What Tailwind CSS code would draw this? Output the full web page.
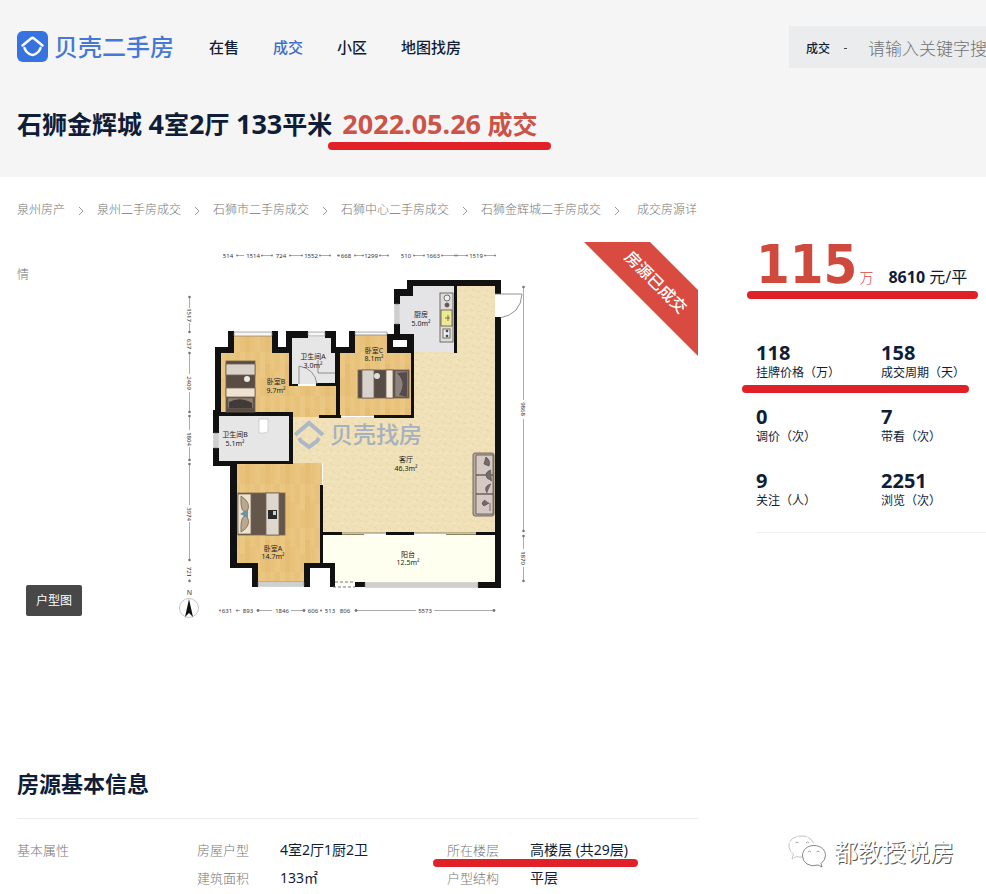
<!DOCTYPE html>
<html lang="zh-CN">
<head>
<meta charset="utf-8">
<meta name="viewport" content="width=device-width, initial-scale=1">
<title>石狮金辉城 4室2厅 133平米 - 贝壳二手房</title>
<script src="https://cdn.jsdelivr.net/npm/@tailwindcss/browser@4"></script>
</head>
<body class="relative min-h-screen overflow-x-hidden bg-white font-['Noto_Sans','Noto_Sans_CJK_SC',sans-serif] text-[#101d37]">
<header class="h-[177px] bg-[#f5f5f5] pl-[17px]">
  <div class="flex h-[94px] items-center">
    <a href="#" class="flex items-center gap-[6px] pb-[2px] text-[#4578d6]" aria-label="贝壳二手房">
      <svg class="size-[31px]" viewBox="0 0 31 31" aria-hidden="true">
        <rect width="31" height="31" rx="6" fill="#3672e0"/>
        <path d="M5.500 14.500 14 7.500Q15.500 6.300 17 7.500L25.500 14.500" fill="none" stroke="#fff" stroke-width="2.500" stroke-linecap="round" stroke-linejoin="round"/>
        <path d="M7.500 17Q8.500 20.500 12.500 23Q15.500 24.800 18.500 23Q22.500 20.500 23.500 17" fill="none" stroke="#fff" stroke-width="2.500" stroke-linecap="round"/>
      </svg>
      <span class="text-[24px] font-medium leading-[31px]">贝壳二手房</span>
    </a>
    <nav class="ml-[35px] flex gap-[34px] text-[15px] font-medium leading-[22px]">
      <a href="#">在售</a>
      <a href="#" class="text-[#3f6fc4]">成交</a>
      <a href="#">小区</a>
      <a href="#">地图找房</a>
    </nav>
    <form class="ml-auto flex h-[42px] w-[197px] items-center overflow-hidden bg-[#ebecee] pl-[17px] pt-[3px]">
      <select aria-label="搜索类型" class="w-[38px] shrink-0 appearance-none bg-transparent text-[12px] font-medium outline-none"><option>成交</option></select>
      <span class="h-px w-[3px] shrink-0 bg-[#444]" aria-hidden="true"></span>
      <input aria-label="关键字" type="text" placeholder="请输入关键字搜索" class="ml-[21px] w-[150px] shrink-0 bg-transparent text-[17px] font-light outline-none placeholder:text-[#6f7276]">
    </form>
  </div>
  <h1 class="flex items-center pt-[12px] text-[25px] font-bold leading-[36px]">
    <span class="whitespace-pre">石狮金辉城 <span class="text-[27px]">4</span>室<span class="text-[27px]">2</span>厅 <span class="text-[27px]">133</span>平米</span>
    <span class="relative ml-[10px] whitespace-nowrap text-[#cc5347]"><span class="text-[27px]">2022.05.26</span> 成交<span class="absolute -left-[14px] -right-[13px] top-[36px] h-[8px] rounded-full bg-[#e02128]"></span></span>
  </h1>
</header>

<main class="pl-[17px]">
  <div class="grid grid-cols-[1fr_230px] gap-[58px]">
    <div>
      <nav aria-label="面包屑" class="h-[65px] text-[12px] font-light leading-[65px] text-[#777]">
        <a href="#">泉州房产</a><svg class="mx-[13px] inline h-[8px] w-[6px]" viewBox="0 0 6 8"><path d="M1 0 5 4 1 8" fill="none" stroke="#999"/></svg><a href="#">泉州二手房成交</a><svg class="mx-[13px] inline h-[8px] w-[6px]" viewBox="0 0 6 8"><path d="M1 0 5 4 1 8" fill="none" stroke="#999"/></svg><a href="#">石狮市二手房成交</a><svg class="mx-[13px] inline h-[8px] w-[6px]" viewBox="0 0 6 8"><path d="M1 0 5 4 1 8" fill="none" stroke="#999"/></svg><a href="#">石狮中心二手房成交</a><svg class="mx-[13px] inline h-[8px] w-[6px]" viewBox="0 0 6 8"><path d="M1 0 5 4 1 8" fill="none" stroke="#999"/></svg><a href="#">石狮金辉城二手房成交</a><svg class="ml-[13px] mr-[17px] inline h-[8px] w-[6px]" viewBox="0 0 6 8"><path d="M1 0 5 4 1 8" fill="none" stroke="#999"/></svg><span>成交房源详</span><span>情</span>
      </nav>
      <div class="relative">
        <svg class="block w-full" viewBox="17 242 681 390" role="img" aria-label="户型图">
          <defs>
            <pattern id="wood" width="20" height="44" patternUnits="userSpaceOnUse">
              <rect width="20" height="44" fill="#e8c27b"/>
              <rect width="5" height="26" fill="#ebc784"/><rect x="5" y="12" width="5" height="32" fill="#e5bd73"/><rect x="10" width="5" height="18" fill="#eac580"/><rect x="15" y="20" width="5" height="24" fill="#e9c580"/>
            </pattern>
            <pattern id="stone" width="14" height="14" patternUnits="userSpaceOnUse">
              <rect width="14" height="14" fill="#f0e1b8"/>
              <path d="M1 3l3 1M8 1l3 2M5 8l2-1M10 9l3 2M2 12l2-1" stroke="#eadaab" stroke-width="1.200"/><path d="M5 5l2 1M11 6l2-1M7 12l2 0" stroke="#f5e9c7" stroke-width="1.200"/>
            </pattern>
            <marker id="ar" viewBox="0 0 4 4" refX="2" refY="2" markerWidth="4" markerHeight="4"><circle cx="2" cy="2" r="1.300" fill="#777"/></marker>
          </defs>
          <path d="M457 286H495V533H323V463H292V417H413V352H457z" fill="url(#stone)"/>
          <path d="M234 334H274V352H290V386H337V352H355V333H388V350H412V416H338V417H220V352H234z" fill="url(#wood)"/>
          <path d="M236 463H322V565H305V584H257V565H236z" fill="url(#wood)"/>
          <path d="M412 286H455V352H412V334H400V296H412z" fill="#e4e3e6"/>
          <path d="M292 337H335V384H292zM219 416H290V462H219z" fill="#e6e6e6"/>
          <path d="M323 535H495V583H335V566H323z" fill="#fffff0"/>
          <g fill="#111">
            <path d="M228 331H234V353H221V412H293V464H268V461H289V416H219V433H213V410H215V347H228z"/>
            <path d="M213 448H219V461H268V464H237V563H258V587H252V568H230V466H213z"/>
            <path d="M272 331H278V347H286V331H308V338H292V384H298V386H289V353H272zM325 331H336V347H349V331H355V353H340V415H341V418H319V415H336V386H316V383H335V353H331V338H325z"/>
            <path d="M394 289H407V280H501V294H495V286H457V353H454V286H413V296H400V304H394zM394 324H400V334H414V418H374V415H411V353H387V334H394z"/>
            <path d="M495 317H501V588H478V582H495zM320 485H323V563H335V587H330V568H310V587H304V563H320zM323 532H342V535H323zM386 532H414V535H386zM476 532H495V535H476zM355 582H365V587H355z"/>
          </g>
          <path d="M393 340H407V347H393z" fill="#fff"/>
          <g fill="#f6f6f6" stroke="#777" stroke-width=".600">
            <path d="M234 332H272V336H234zM308 332H325V336H308zM355 332H387V335H355zM395 304H399V324H395zM214 433H218V448H214zM258 582H304V586H258zM365 583H478V587H365z"/>
            <path d="M397 304V324M216 433V448M258 584H304M365 585H478" fill="none"/>
          </g>
          <path d="M342 533H386M414 533H476" stroke="#8b8264"/>
          <path d="M342 534.500H364M446 534.500H476" stroke="#8b8264"/>
          <path d="M335 582H355M333 587H355" stroke="#777" stroke-dasharray="3 2" fill="none"/>
          <path d="M495 294H522M522 294Q521 314 500 318M299 384V366M299 366Q315 369 317 384M318 360V373H335" fill="none" stroke="#777" stroke-width=".800"/>

          <g stroke="#746354" stroke-width=".800">
            <rect x="226" y="361" width="29" height="51" fill="#584c43"/>
            <rect x="226" y="364" width="29" height="11" fill="#d8d2c9"/><rect x="226" y="388" width="29" height="9" fill="#eee2d2"/>
            <rect x="228" y="398" width="25" height="10" fill="#8b8078"/>
          </g>
          <circle cx="247" cy="379" r="3" fill="#e9e9e5"/><path d="M229 402Q240 396 252 403V408H229z" fill="#413b38"/>
          <g stroke="#746354" stroke-width=".800">
            <rect x="358" y="370" width="51" height="28" fill="#574c45"/>
            <rect x="362" y="370" width="12" height="28" fill="#d8d2cc"/><rect x="386" y="370" width="7" height="28" fill="#f0e8dd"/>
            <rect x="395" y="371" width="13" height="26" fill="#8e827e"/>
          </g>
          <path d="M397 373Q407 383 399 395L407 397V372z" fill="#544c4b"/><circle cx="377" cy="376" r="3" fill="#ddd"/>
          <g stroke="#77664f" stroke-width=".800">
            <rect x="238" y="493" width="47" height="42" fill="#64564b"/>
            <rect x="238" y="494" width="13" height="40" fill="#eee3d2"/><rect x="266" y="493" width="13" height="42" fill="#ddd7cf"/>
            <path d="M241 496Q252 503 247 512Q240 514 241 496M241 532Q252 526 247 516Q240 514 241 532" fill="#b9a88f"/>
          </g>
          <path d="M240 514l8-5v9z" fill="#6797a3"/><rect x="268" y="510" width="9" height="9" fill="#292929"/><rect x="273" y="511" width="3" height="4" fill="#ccc"/>
          <g stroke="#58524d" stroke-width=".800">
            <rect x="440" y="293" width="13" height="49" fill="#dcdcda"/><rect x="441" y="310" width="11" height="16" fill="#efe991"/>
            <circle cx="447" cy="298" r="3" fill="#eee"/><circle cx="447" cy="305" r="2" fill="#635552"/><path d="M445 318h5M448 315v6"/><rect x="443" y="329" width="7" height="9" fill="#eee"/><circle cx="447" cy="331" r="1"/><circle cx="447" cy="336" r="1"/>
            <rect x="473" y="453" width="21" height="63" rx="2" fill="#b9aaa4"/>
            <path d="M476 455H493V475H476zM476 475H493V494H476zM476 494H493V514H476z" fill="#d6c9c3"/>
            <path d="M486 457q5 4 3 9l-5-2zM491 470q-7 2-4 8l5 3M491 484q-8 2-4 9M485 500q-5 3-1 6l5-3M490 503v8" fill="#756b67"/>
          </g>
          <path d="M259 419H268V430Q268 433 263 433H259z" fill="#fff" stroke="#bbb" stroke-width=".600"/>

          <g fill="none" stroke="#a5b4c9" stroke-width="4" opacity=".9">
            <path d="M295 435 309 423 323 435"/><path d="M299 438 301 441 309 447 317 441 319 438"/>
          </g>
          <text x="330" y="443" font-size="23" font-weight="500" fill="#a5b0c0">贝壳找房</text>

          <g font-size="7" fill="#222" text-anchor="middle">
            <text x="276" y="384">卧室B</text><text x="276" y="393">9.7m²</text>
            <text x="313" y="359">卫生间A</text><text x="313" y="368">3.0m²</text>
            <text x="374" y="353">卧室C</text><text x="374" y="361">8.1m²</text>
            <text x="421" y="317">厨房</text><text x="421" y="326">5.0m²</text>
            <text x="235" y="437">卫生间B</text><text x="235" y="446">5.1m²</text>
            <text x="406" y="462">客厅</text><text x="406" y="471">46.3m²</text>
            <text x="273" y="551">卧室A</text><text x="273" y="559">14.7m²</text>
            <text x="408" y="557">阳台</text><text x="408" y="565">12.5m²</text>
          </g>
          <g stroke="#888" stroke-width=".700" fill="none">
            <path d="M244 255.500H237M262 255.500H272M302 255.500H290M320 255.500H330M338 255.500H339M363 255.500H355M380 255.500H388M424 255.500H414M442 255.500H455M467 255.500H457M485 255.500H495" marker-mid="url(#ar)" marker-end="url(#ar)"/>
            <path d="M220 610.500H220M240 610.500H236M272 610.500H258M291 610.500H305M320 610.500H321M416 610.500H355M434 610.500H494"/>
            <path d="M189.500 308V296M189.500 323V333M189.500 374V353M189.500 392V412M189.500 430V415M189.500 447V460M189.500 505V464M189.500 522V560M189.500 579V582"/>
            <path d="M523.500 400V286M523.500 419V531M523.500 549V535M523.500 567V582"/>
          </g>
          <g fill="#777">
            <circle cx="220" cy="610.500" r="1"/><circle cx="237" cy="610.500" r="1"/><circle cx="258" cy="610.500" r="1.400"/><circle cx="304" cy="610.500" r="1.400"/><circle cx="321" cy="610.500" r="1"/><circle cx="356" cy="610.500" r="1.400"/><circle cx="494" cy="610.500" r="1.400"/>
            <circle cx="189.500" cy="297" r="1.300"/><circle cx="189.500" cy="332" r="1.300"/><circle cx="189.500" cy="353" r="1.300"/><circle cx="189.500" cy="412" r="1.300"/><circle cx="189.500" cy="416" r="1.300"/><circle cx="189.500" cy="460" r="1.300"/><circle cx="189.500" cy="464" r="1.300"/><circle cx="189.500" cy="560" r="1.300"/><circle cx="189.500" cy="581" r="1.300"/>
            <circle cx="523.500" cy="287" r="1.300"/><circle cx="523.500" cy="531" r="1.300"/><circle cx="523.500" cy="536" r="1.300"/><circle cx="523.500" cy="581" r="1.300"/>
          </g>
          <g font-size="6" fill="#333" text-anchor="middle">
            <text x="228" y="258">514</text><text x="253" y="258">1514</text><text x="281" y="258">724</text><text x="311" y="258">1552</text><text x="346" y="258">668</text><text x="371" y="258">1299</text><text x="406" y="258">510</text><text x="433" y="258">1663</text><text x="476" y="258">1519</text>
            <text x="227" y="613">631</text><text x="248" y="613">893</text><text x="282" y="613">1846</text><text x="313" y="613">606</text><text x="330" y="613">513</text><text x="345" y="613">806</text><text x="425" y="613">5573</text>
            <text transform="translate(187 315) rotate(90)">1517</text><text transform="translate(187 344) rotate(90)">637</text><text transform="translate(187 383) rotate(90)">2409</text><text transform="translate(187 439) rotate(90)">1804</text><text transform="translate(187 514) rotate(90)">3974</text><text transform="translate(187 572) rotate(90)">721</text>
            <text transform="translate(521 409) rotate(90)">9868</text><text transform="translate(521 558) rotate(90)">1870</text>
            <text x="189.500" y="595" font-size="7">N</text>
          </g>
          <circle cx="189" cy="608" r="9.500" fill="#fff" stroke="#aaa" stroke-width=".700"/><path d="M189 599 193 617 189 613 185 617z" fill="#111"/>

          <path d="M584 242H650L698 290V356z" fill="#d94b40"/>
          <text transform="translate(656 282) rotate(45)" y="6" text-anchor="middle" font-size="16" font-weight="500" fill="#fff">房源已成交</text>
        </svg>
        <button type="button" class="absolute bottom-[16px] left-[9px] h-[31px] w-[56px] rounded-[2px] bg-[#484848] text-[12px] text-white">户型图</button>
      </div>
    </div>

    <aside class="pt-[59px]">
      <div class="relative flex h-[65px] items-baseline">
        <span class="font-['DejaVu_Sans_Condensed','DejaVu_Sans',sans-serif] text-[54px] font-bold leading-[58px] text-[#d0493d]">115</span>
        <span class="ml-[2px] text-[14px] font-light text-[#d0493d]">万</span>
        <span class="ml-[15px] whitespace-nowrap text-[16px]"><b>8610</b> 元/平</span>
        <span class="absolute -left-[9px] right-[8px] top-[55px] h-[8px] rounded-full bg-[#e02128]"></span>
      </div>
      <dl class="relative mt-[42px] grid grid-cols-[125px_1fr] gap-y-[24px] border-b border-[#f0f0f0] pb-[21px] leading-[20px]">
        <div class="flex flex-col-reverse"><dt class="text-[12px]">挂牌价格（万）</dt><dd class="text-[20px] font-bold">118</dd></div>
        <div class="flex flex-col-reverse"><dt class="text-[12px]">成交周期（天）</dt><dd class="text-[20px] font-bold">158</dd></div>
        <div class="flex flex-col-reverse"><dt class="text-[12px]">调价（次）</dt><dd class="text-[20px] font-bold">0</dd></div>
        <div class="flex flex-col-reverse"><dt class="text-[12px]">带看（次）</dt><dd class="text-[20px] font-bold">7</dd></div>
        <div class="flex flex-col-reverse"><dt class="text-[12px]">关注（人）</dt><dd class="text-[20px] font-bold">9</dd></div>
        <div class="flex flex-col-reverse"><dt class="text-[12px]">浏览（次）</dt><dd class="text-[20px] font-bold">2251</dd></div>
        <span class="absolute -left-[14px] right-[17px] top-[42px] h-[8px] rounded-full bg-[#e02128]"></span>
      </dl>
    </aside>
  </div>

  <section class="mr-[288px] pt-[135px]">
    <h2 class="border-b border-[#ececec] pb-[19px] text-[22px] font-bold leading-[32px]">房源基本信息</h2>
    <div class="flex pt-[17px] leading-[28px]">
      <h3 class="w-[180px] text-[13px] font-light text-[#777]">基本属性</h3>
      <dl class="grid grid-cols-[83px_167px_83px_1fr] whitespace-nowrap text-[14px]">
        <dt class="text-[13px] font-light text-[#777]">房屋户型</dt><dd>4室2厅1厨2卫</dd>
        <dt class="relative text-[13px] font-light text-[#777]">所在楼层<span class="absolute -left-[14px] top-[23px] h-[8px] w-[205px] rounded-full bg-[#e02128]"></span></dt><dd>高楼层 (共29层)</dd>
        <dt class="text-[13px] font-light text-[#777]">建筑面积</dt><dd>133㎡</dd>
        <dt class="text-[13px] font-light text-[#777]">户型结构</dt><dd>平层</dd>
      </dl>
    </div>
  </section>
</main>

<div class="absolute bottom-[25px] right-[32px] flex items-center gap-[8px]">
  <svg class="h-[34px] w-[38px]" viewBox="0 0 38 34" fill="none" stroke="#999" stroke-width=".900" aria-hidden="true">
    <path d="M14.500 22Q11 22.500 9 21.500L4 24 5.500 19Q-1 14 1.500 7Q5 1 13 1Q23 1 26 9" stroke="#bbb" stroke-dasharray="9 1"/>
    <path d="M14.500 21C14.500 14 20 10.500 26 10.500C33 10.500 37.500 15 37.500 20.500Q37.500 25 33 28.500L34 32 30 30Q24 32 19 29Q14.500 26 14.500 21z" fill="#fff" stroke="#777"/>
    <path d="M7.500 8q1.500-2 3 0M18 8q1.500-2 3 0M20 17q1.500-2 3 0M28.500 17q1.500-2 3 0"/>
  </svg>
  <span class="text-[24px] leading-[34px] text-white [text-shadow:1px_1px_0_#555]">都教授说房</span>
</div>
</body>
</html>
